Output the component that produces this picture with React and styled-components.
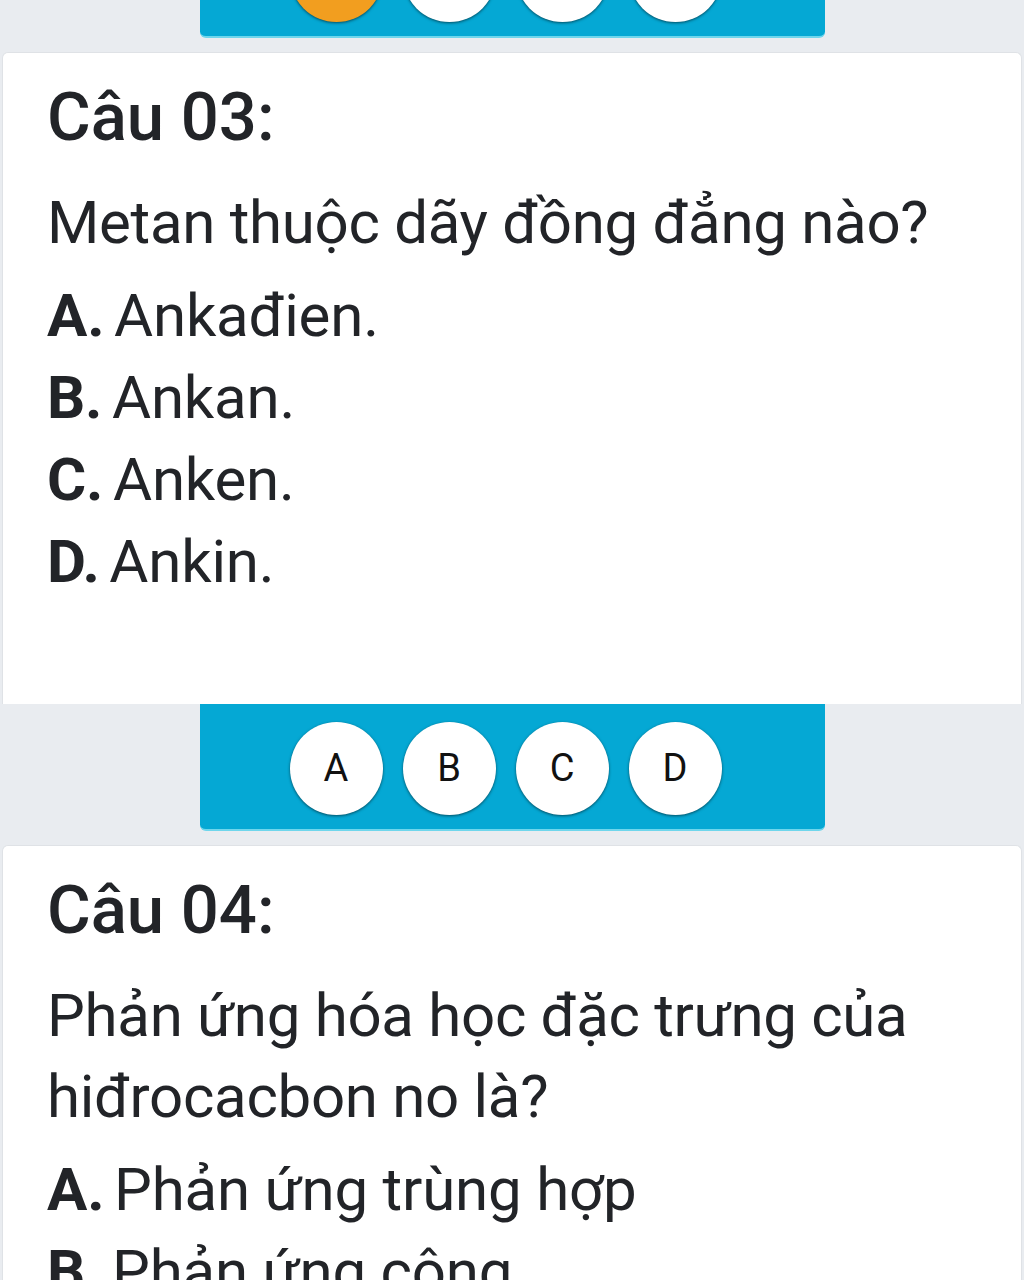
import React from "react";
import styled, { createGlobalStyle } from "styled-components";

const Global = createGlobalStyle`
  html, body { margin: 0; padding: 0; background: #e9ecf0; }
  body { font-family: Roboto, "Noto Sans", "Liberation Sans", sans-serif; color: #222428; }
`;

const Page = styled.div`
  display: flex;
  flex-direction: column;
  align-items: center;
  margin-top: -89px;
`;

const AnswerBar = styled.div`
  flex-shrink: 0;
  width: 625px;
  height: 127px;
  box-sizing: border-box;
  background: #05a8d4;
  border-radius: 0 0 6px 6px;
  border-bottom: 2px solid #6fd6ec;
  display: flex;
  align-items: center;
  justify-content: center;
  gap: 20px;
  padding: 0 13px 0 0;
  margin-bottom: 14px;
`;

const Choice = styled.div`
  flex-shrink: 0;
  width: 93px;
  height: 93px;
  border-radius: 50%;
  background: ${(p) => (p.$selected ? "#f29e1f" : "#ffffff")};
  box-shadow: 0 1px 3px rgba(0, 0, 0, 0.55);
  display: flex;
  align-items: center;
  justify-content: center;
  font-size: 38px;
  color: #111;
  margin-top: 3px;
`;

const Card = styled.div`
  flex-shrink: 0;
  align-self: stretch;
  margin: 0 2px;
  background: #fff;
  border: 1px solid #dfe2e6;
  border-bottom: none;
  border-radius: 6px 6px 0 0;
  padding: 23px 44px 0 44px;
  height: ${(p) => p.$height}px;
  box-sizing: border-box;
`;

const Title = styled.h2`
  margin: 0;
  font-size: 67px;
  font-weight: 500;
  line-height: 82px;
`;

const Question = styled.p`
  margin: 24px 0 12px 0;
  font-size: 60px;
  font-weight: 400;
  line-height: 81px;
  letter-spacing: -0.3px;
`;

const Option = styled.div`
  font-size: 60px;
  line-height: 82px;
  white-space: nowrap;
  letter-spacing: -0.2px;
`;

const Letter = styled.span`
  font-weight: 700;
  margin-right: -5px;
`;

const Bar = ({ selected }) => (
  <AnswerBar>
    {["A", "B", "C", "D"].map((l, i) => (
      <Choice key={l} $selected={selected === i}>
        {selected === undefined ? l : ""}
      </Choice>
    ))}
  </AnswerBar>
);

const Opt = ({ letter, children }) => (
  <Option>
    <Letter>{letter}.</Letter> {children}
  </Option>
);

export default function App() {
  return (
    <>
      <Global />
      <Page>
        <Bar selected={0} />
        <Card $height={652}>
          <Title>Câu 03:</Title>
          <Question>Metan thuộc dãy đồng đẳng nào?</Question>
          <Opt letter="A">Ankađien.</Opt>
          <Opt letter="B">Ankan.</Opt>
          <Opt letter="C">Anken.</Opt>
          <Opt letter="D">Ankin.</Opt>
        </Card>
        <Bar />
        <Card $height={600}>
          <Title>Câu 04:</Title>
          <Question>Phản ứng hóa học đặc trưng của hiđrocacbon no là?</Question>
          <Opt letter="A">Phản ứng trùng hợp</Opt>
          <Opt letter="B">Phản ứng cộng</Opt>
        </Card>
      </Page>
    </>
  );
}
